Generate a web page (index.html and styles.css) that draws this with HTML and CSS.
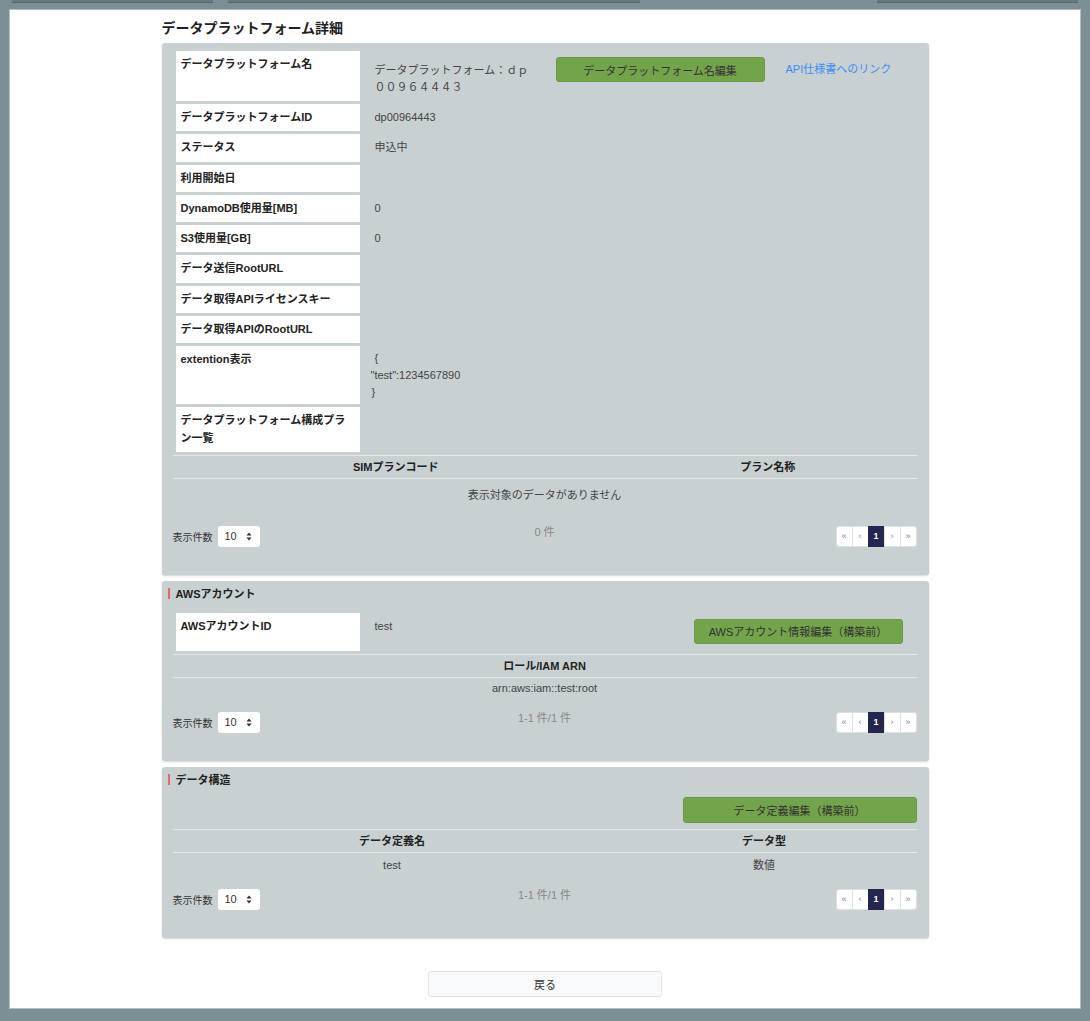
FILE: index.html
```html
<!DOCTYPE html>
<html lang="ja">
<head>
    <meta charset="UTF-8">
    <meta name="viewport" content="width=device-width, initial-scale=1.0">
    <title>データプラットフォーム詳細</title>
    <link rel="stylesheet" href="styles.css">
</head>
<body>
    <div class="top-strip">
        <span class="tab tab-1"></span>
        <span class="tab tab-2"></span>
        <span class="tab tab-3"></span>
    </div>
    <div class="page">
        <div class="container">
            <h1>データプラットフォーム詳細</h1>

            <!-- 基本情報 -->
            <div class="card">
                <table class="detail">
                    <tr>
                        <th>データプラットフォーム名</th>
                        <td class="name-cell">
                            <div class="name-row">
                                <span class="name-val">データプラットフォーム：ｄｐ００９６４４４３</span>
                                <button class="btn-edit">データプラットフォーム名編集</button>
                                <a href="#" class="api-link">API仕様書へのリンク</a>
                            </div>
                        </td>
                    </tr>
                    <tr><th>データプラットフォームID</th><td>dp00964443</td></tr>
                    <tr><th>ステータス</th><td>申込中</td></tr>
                    <tr><th>利用開始日</th><td></td></tr>
                    <tr><th>DynamoDB使用量[MB]</th><td>0</td></tr>
                    <tr><th>S3使用量[GB]</th><td>0</td></tr>
                    <tr><th>データ送信RootURL</th><td></td></tr>
                    <tr><th>データ取得APIライセンスキー</th><td></td></tr>
                    <tr><th>データ取得APIのRootURL</th><td></td></tr>
                    <tr>
                        <th>extention表示</th>
                        <td class="json-cell"><span class="brace-open">{</span><br>"test":1234567890<br><span class="brace-close">}</span></td>
                    </tr>
                    <tr><th>データプラットフォーム構成プラン一覧</th><td></td></tr>
                </table>

                <table class="list">
                    <tr>
                        <th class="col-60">SIMプランコード</th>
                        <th>プラン名称</th>
                    </tr>
                    <tr class="empty">
                        <td colspan="2">表示対象のデータがありません</td>
                    </tr>
                </table>
                <div class="list-footer first">
                    <div class="per-page">
                        <span>表示件数</span>
                        <div class="select">10<svg width="6" height="9" viewBox="0 0 6 9"><path d="M3 0.5L5.6 3.6H0.4Z M3 8.5L0.4 5.4H5.6Z" fill="#333"/></svg></div>
                    </div>
                    <div class="count">0 件</div>
                    <div class="pager">
                        <span>«</span><span>‹</span><span class="active">1</span><span>›</span><span>»</span>
                    </div>
                </div>
            </div>

            <!-- AWSアカウント -->
            <div class="card">
                <h2 class="section-title">AWSアカウント</h2>
                <table class="detail">
                    <tr>
                        <th>AWSアカウントID</th>
                        <td class="acct-cell">
                            <div class="acct-row">
                                <span class="acct-val">test</span>
                                <button class="btn-edit">AWSアカウント情報編集（構築前）</button>
                            </div>
                        </td>
                    </tr>
                </table>
                <table class="list">
                    <tr><th>ロール/IAM ARN</th></tr>
                    <tr><td>arn:aws:iam::test:root</td></tr>
                </table>
                <div class="list-footer">
                    <div class="per-page">
                        <span>表示件数</span>
                        <div class="select">10<svg width="6" height="9" viewBox="0 0 6 9"><path d="M3 0.5L5.6 3.6H0.4Z M3 8.5L0.4 5.4H5.6Z" fill="#333"/></svg></div>
                    </div>
                    <div class="count">1-1 件/1 件</div>
                    <div class="pager">
                        <span>«</span><span>‹</span><span class="active">1</span><span>›</span><span>»</span>
                    </div>
                </div>
            </div>

            <!-- データ構造 -->
            <div class="card">
                <h2 class="section-title">データ構造</h2>
                <div class="toolbar">
                    <button class="btn-edit wide">データ定義編集（構築前）</button>
                </div>
                <table class="list roomy">
                    <tr>
                        <th class="col-59">データ定義名</th>
                        <th>データ型</th>
                    </tr>
                    <tr>
                        <td>test</td>
                        <td>数値</td>
                    </tr>
                </table>
                <div class="list-footer">
                    <div class="per-page">
                        <span>表示件数</span>
                        <div class="select">10<svg width="6" height="9" viewBox="0 0 6 9"><path d="M3 0.5L5.6 3.6H0.4Z M3 8.5L0.4 5.4H5.6Z" fill="#333"/></svg></div>
                    </div>
                    <div class="count">1-1 件/1 件</div>
                    <div class="pager">
                        <span>«</span><span>‹</span><span class="active">1</span><span>›</span><span>»</span>
                    </div>
                </div>
            </div>

            <button class="back">戻る</button>
        </div>
    </div>
</body>
</html>
```

FILE: styles.css
```css
body {
    margin: 0;
    background-color: #7c8f94;
    font-family: "Liberation Sans", "Noto Sans CJK JP", sans-serif;
    font-size: 11px;
    color: #333;
}

/* cut-off tabs above the panel */
.top-strip {
    display: flex;
    height: 3px;
}

.tab {
    height: 2px;
    background-color: #68797e;
    border-bottom: 1px solid #56666b;
}

.tab-1 { margin-left: 12px; width: 201px; }
.tab-2 { margin-left: 15px; width: 412px; }
.tab-3 { margin-left: 237px; width: 201px; }

.page {
    margin: 6px 9px 0 9px;
    background-color: #fff;
    border: 1px solid #b3bec1;
    padding: 8px 0 11px;
}

.container {
    width: 767px;
    margin: 0 auto;
}

h1 {
    margin: 0 0 5px;
    font-size: 14px;
    line-height: 20px;
    color: #222;
}

.card {
    background-color: #c9d0d2;
    border-radius: 3px;
    box-shadow: 0 1px 2px rgba(0, 0, 0, 0.18);
    padding: 5px 12px 28px 11px;
}

.card + .card {
    margin-top: 6px;
}

.section-title {
    margin: 0 0 8px -5px;
    font-size: 11px;
    line-height: 16px;
    color: #222;
}

.section-title::before {
    content: "";
    display: inline-block;
    width: 2px;
    height: 11px;
    margin-right: 6px;
    vertical-align: -1px;
    background-color: #e06b6b;
}

/* label / value table */
.detail {
    width: 100%;
    border-collapse: separate;
    border-spacing: 3px;
}

.detail th {
    width: 174px;
    padding: 5px;
    background-color: #fff;
    text-align: left;
    vertical-align: top;
    line-height: 17.3px;
    color: #222;
}

.detail td {
    padding: 5px 12px;
    vertical-align: top;
    line-height: 17.3px;
    color: #444;
}

.detail td.name-cell {
    padding: 6px 12px 5px;
}

.name-row {
    display: flex;
    align-items: flex-start;
}

.name-val {
    width: 160px;
    padding-top: 5px;
    line-height: 17px;
}

.name-row .btn-edit {
    margin-left: 21px;
}

.api-link {
    margin-left: 21px;
    padding-top: 4px;
    color: #3b8cf3;
    text-decoration: none;
}

.detail td.json-cell {
    padding: 4px 12px 3px 8px;
    line-height: 17px;
}

.brace-open {
    padding-left: 4px;
}

.brace-close {
    padding-left: 1px;
}

.detail td.acct-cell {
    padding: 6px 11px 7px 12px;
}

.acct-row {
    display: flex;
    justify-content: space-between;
    align-items: flex-start;
}

.acct-val {
    margin-top: -1px;
    line-height: 17px;
}

.btn-edit {
    width: 209px;
    height: 25px;
    padding: 0;
    background-color: #73a34a;
    border: 1px solid #6b9a45;
    border-radius: 3px;
    font-family: inherit;
    font-size: 11px;
    color: #333;
    cursor: pointer;
}

.btn-edit.wide {
    width: 234px;
    height: 26px;
}

.toolbar {
    display: flex;
    justify-content: flex-end;
    padding: 1px 0 6px;
}

/* list tables */
.list {
    width: 100%;
    border-collapse: collapse;
}

.list th {
    padding: 3px 8px;
    border-top: 1px solid #e4e8e9;
    border-bottom: 1px solid #e4e8e9;
    line-height: 16px;
    color: #222;
}

.list td {
    padding: 2px 8px;
    line-height: 16px;
    text-align: center;
    color: #444;
}

.list.roomy td {
    padding: 4px 8px 2px;
}

.list .empty td {
    padding: 8px;
}

.col-60 { width: 60%; }
.col-59 { width: 59%; }

.list-footer {
    display: grid;
    grid-template-columns: 1fr auto 1fr;
    align-items: start;
    margin-top: 14px;
}

.list-footer.first {
    margin-top: 15px;
}

.per-page {
    display: flex;
    align-items: center;
    height: 21px;
    font-size: 10px;
    color: #333;
}

.select {
    box-sizing: border-box;
    width: 42px;
    height: 21px;
    margin-left: 5px;
    padding: 0 8px 0 7px;
    display: flex;
    align-items: center;
    justify-content: space-between;
    background-color: #fff;
    border-radius: 3px;
    font-size: 11px;
    color: #333;
}

.count {
    margin-top: -2px;
    line-height: 16px;
    color: #888;
}

.pager {
    justify-self: end;
    display: flex;
}

.pager span {
    box-sizing: border-box;
    width: 17px;
    height: 21px;
    margin-left: -1px;
    display: flex;
    align-items: center;
    justify-content: center;
    background-color: #fff;
    border: 1px solid #dde1e4;
    font-size: 9px;
    color: #7d868d;
}

.pager span:first-child {
    margin-left: 0;
    border-radius: 3px 0 0 3px;
}

.pager span:last-child {
    border-radius: 0 3px 3px 0;
}

.pager span.active {
    background-color: #25264f;
    border-color: #25264f;
    color: #fff;
    font-weight: bold;
}

.back {
    display: block;
    width: 234px;
    height: 26px;
    margin: 33px auto 0;
    background-color: #f8f9fa;
    border: 1px solid #e1e4e7;
    border-radius: 3px;
    font-family: inherit;
    font-size: 11px;
    color: #333;
    cursor: pointer;
}
```
